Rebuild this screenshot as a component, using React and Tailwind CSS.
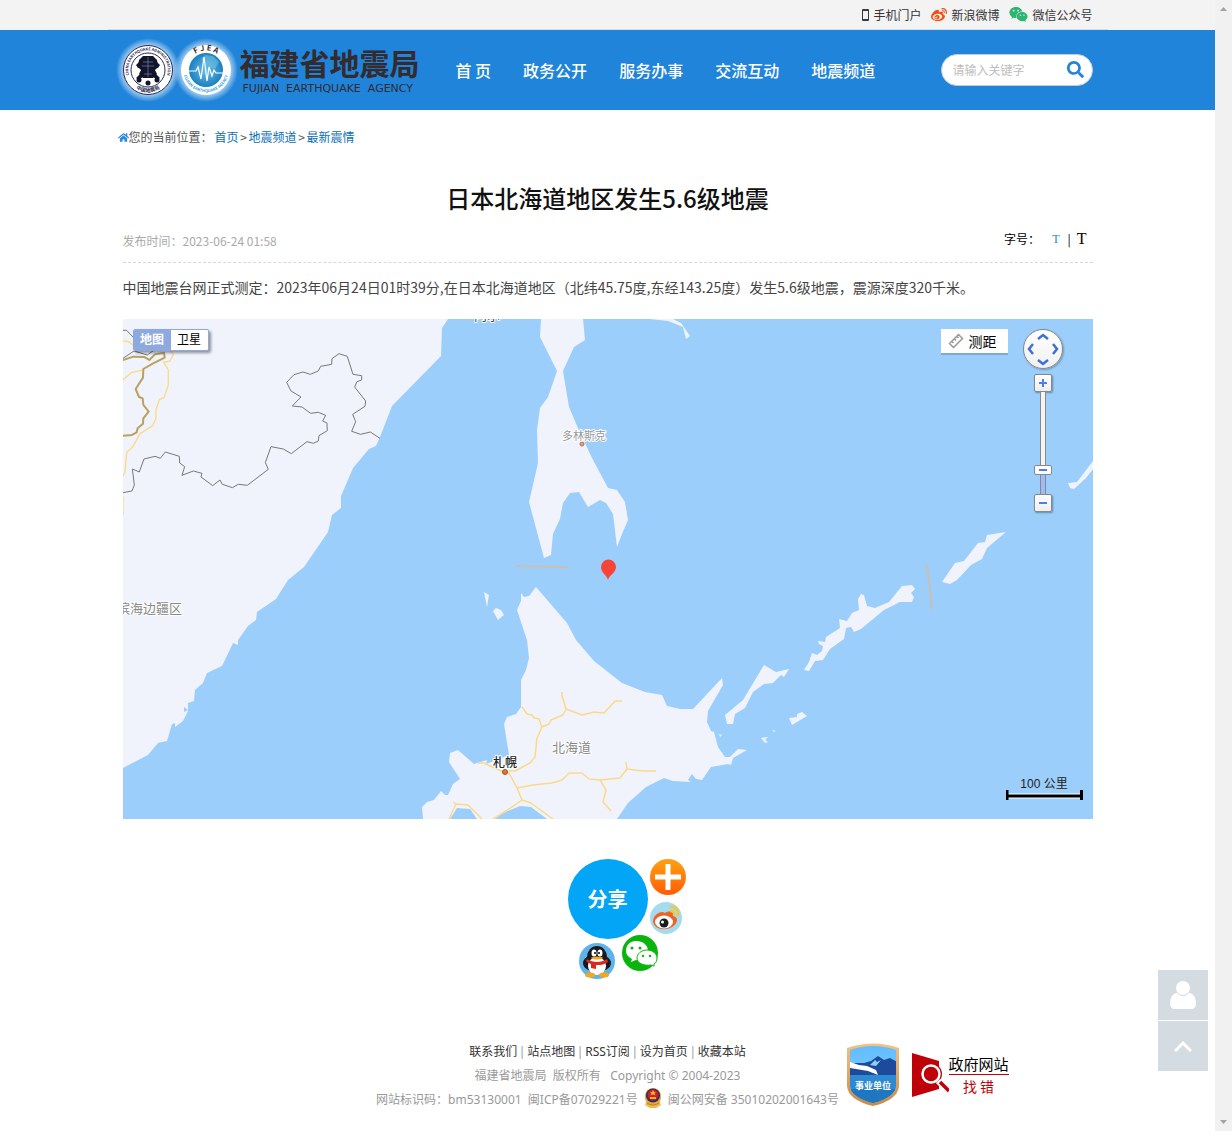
// src/App.jsx
import React, { useState } from "react";

// Icons
import { FaWeibo, FaWeixin, FaSearch, FaHome } from "react-icons/fa";

const navItems = ["首 页", "政务公开", "服务办事", "交流互动", "地震频道"];
const crumbs = ["首页", "地震频道", "最新震情"];
const footerLinks = ["联系我们", "站点地图", "RSS订阅", "设为首页", "收藏本站"];

const MIN_ZOOM = 0;
const MAX_ZOOM = 17;

function TopBar() {
  return (
    <div className="bg-[#f3f3f3]">
      <div className="mx-auto flex h-[30px] max-w-[1000px] items-center justify-end gap-[10px] border-b border-[#cfdfee] px-[15px] text-xs text-[#333]">
        <a href="#mobile" className="flex items-center gap-1">
          <svg viewBox="0 0 7 12" className="h-3 w-[7px]">
            <rect width="7" height="12" rx="1" fill="#3a3a3a" />
            <rect x="1" y="2" width="5" height="8" fill="#f3f3f3" />
          </svg>
          手机门户
        </a>
        <a href="#weibo" className="flex items-center gap-1">
          <FaWeibo size={16} className="text-[#fb4a0c]" />
          新浪微博
        </a>
        <a href="#wechat" className="flex items-center gap-1">
          <FaWeixin size={19} className="text-[#2cb672]" />
          微信公众号
        </a>
      </div>
    </div>
  );
}

function Emblems() {
  return (
    <svg viewBox="0 0 132 80" className="h-20 w-[132px] shrink-0">
      <defs>
        <radialGradient id="glow">
          <stop offset="0.76" stopColor="#fff" stopOpacity="0.6" />
          <stop offset="1" stopColor="#fff" stopOpacity="0" />
        </radialGradient>
        <radialGradient id="globe">
          <stop offset="0" stopColor="#6cc0e6" />
          <stop offset="1" stopColor="#1a80c0" />
        </radialGradient>
        <path id="ringA" d="M23 50 A19.700 19.700 0 1 1 57 50" />
        <path id="ringB" d="M22 53 A22.500 22.500 0 0 0 58 53" />
        <path id="ringD" d="M75.500 44 A23 23 0 0 0 120.500 44" />
        <path id="ringE" d="M83 27.500 A19.500 19.500 0 0 1 113 27.500" />
      </defs>
      <circle cx="40" cy="40" r="32" fill="url(#glow)" />
      <circle cx="98" cy="40" r="32" fill="url(#glow)" />

      <circle cx="40" cy="40" r="24.500" fill="#fff" stroke="#262a52" strokeWidth="1" />
      <circle cx="40" cy="40" r="17" fill="#fff" stroke="#262a52" strokeWidth="1" />
      <text fontSize="3.800" fontWeight="700" fill="#262a52" textAnchor="middle">
        <textPath href="#ringA" startOffset="50%">CHINA EARTHQUAKE ADMINISTRATION</textPath>
      </text>
      <text fontSize="5" fontWeight="700" fill="#262a52" textAnchor="middle">
        <textPath href="#ringB" startOffset="50%">中国地震局</textPath>
      </text>
      <g fill="#12142c">
        <path d="M35 26h10l4 4 1 7-3 3 2 4-4 4h-10l-4-4 2-4-3-3 1-7z" />
        <path d="M31 32l-3 3 2 3 3-1zM49 32l3 3-2 3-3-1zM33 43l-5 5 3 2 5-4zM47 43l5 5-3 2-5-4z" />
        <circle cx="31" cy="50" r="2.500" />
        <circle cx="40" cy="53" r="2.500" />
        <circle cx="49" cy="50" r="2.500" />
      </g>
      <path d="M35 32h10M34 36h12M36 44h8M40 27v20" stroke="#7c80a0" strokeWidth="0.700" />

      <circle cx="98" cy="40" r="25" fill="#fff" />
      <circle cx="98" cy="40" r="17" fill="url(#globe)" />
      <path d="M93 29l4-4 8 1 6 6-4 7-8-3z" fill="#7cc9e8" opacity="0.500" />
      <text fontSize="7.500" fontWeight="700" fill="#3a2c2c" textAnchor="middle">
        <textPath href="#ringE" startOffset="50%">F J E A</textPath>
      </text>
      <text fontSize="4" fontWeight="700" fill="#3aa0dc" textAnchor="middle">
        <textPath href="#ringD" startOffset="50%">FUJIAN EARTHQUAKE AGENCY</textPath>
      </text>
      <path
        d="M81 41h7l2-4 3 12 3-22 3 24 2-14 3 9 2-6 2 3h8"
        fill="none"
        stroke="#fff"
        strokeWidth="1.200"
      />
    </svg>
  );
}

function Header() {
  return (
    <header className="bg-[#1f84da]">
      <div className="mx-auto flex h-20 max-w-[1000px] items-center pr-[15px]">
        <a href="#home" className="flex items-center text-[#332b2e]">
          <Emblems />
          <span className="flex w-[182px] flex-col gap-1">
            <span className="text-[30px] leading-[34px] font-bold whitespace-nowrap">福建省地震局</span>
            <span className="pl-[3px] font-['DejaVu_Sans',sans-serif] text-[11px] leading-3 whitespace-pre">
              {"FUJIAN  EARTHQUAKE  AGENCY"}
            </span>
          </span>
        </a>
        <nav className="ml-[34px] flex gap-8 text-base font-medium whitespace-nowrap text-white">
          {navItems.map((item) => (
            <a key={item} href="#nav">
              {item}
            </a>
          ))}
        </nav>
        <form
          className="ml-auto flex h-8 w-[152px] items-center rounded-full border border-[#c4cdd6] bg-white pr-2 pl-[11px]"
          onSubmit={(e) => e.preventDefault()}
        >
          <input
            type="text"
            aria-label="搜索"
            placeholder="请输入关键字"
            className="w-full min-w-0 bg-transparent text-xs outline-none placeholder:text-[#bdbdbd]"
          />
          <button type="submit" aria-label="搜索" className="shrink-0 pb-0.5 text-[#1f84da]">
            <FaSearch size={17} />
          </button>
        </form>
      </div>
    </header>
  );
}

function MapCanvas() {
  return (
    <svg
      viewBox="123 319 970 500"
      preserveAspectRatio="xMidYMid slice"
      className="block h-[500px] w-full bg-[#9bcefa]"
    >
      {/* Land */}
      <g fill="#f0f3fb">
        <path d="M123 319H448L442 328 441 356 392 406 380 437 376 446 369 449 353 468 341 496 341 508 332 515 328 532 304 567 288 580 276 599 257 612 256 620 248 626 238 640 238 645 233 643 222 666 207 673 203 683 195 690 194 701 188 703 188 711 183 721 175 727 175 723 172 724 167 741 158 743 148 755 123 768Z" />
        <path d="M541 319L540 337 557 371 548 397 540 408 537 430 538 463 529 502 544 558 551 555 553 534 560 519 563 503 570 493 579 492 588 507 600 500 606 503 613 514 617 547 622 534 628 520 625 502 617 490 608 488 592 458 585 443 578 428 569 407 563 371 574 347 585 340 583 319Z" />
        <path d="M650 319H673L681 323 690 336 686 339 683 327 668 321Z" />
        <path d="M521 593L524 597 529 596 536 587 567 623 576 640 594 661 622 683 645 692 662 695 667 706 680 709 693 709 722 678 723 685 708 711 707 722 711 731 714 732 718 747 725 757 730 757 738 749 747 750 733 758 731 765 728 764 711 767 702 780 696 779 692 774 688 780 691 782 673 781 664 778 646 787 628 803 617 819H547L531 807 520 806 503 813 495 819H477L470 809 457 808 450 819H423L422 807 427 802 434 800 441 791 445 795 448 795 453 784 460 779 449 762 450 753 458 750 474 764 487 760 486 764 509 755 504 724 507 717 516 714 521 707 521 680 526 670 529 658 527 640 517 610 521 601Z" />
        <path d="M1006 532L987 535 985 542 978 543 964 561 955 563 942 582 950 584 957 580 971 565 982 559 987 548Z" />
        <path d="M804 670L809 671 815 661 823 660 830 649 844 639 846 628 851 627 854 632 861 629 884 610 900 602 912 602 914 597 911 593 915 589 912 585 902 586 889 602 875 608 867 606 864 595 861 594 858 599 859 610 852 613 847 621 839 619 840 628 826 637 825 642 818 641 819 644 823 646 822 651 817 655 812 653 809 662Z" />
        <path d="M764 665L776 672 789 669 784 677 781 675 773 683 764 684 753 692 745 708 735 714 733 724 727 724 725 715 743 700Z" />
        <path d="M789 718L797 717 797 714 802 712 807 716 792 725ZM761 738L768 737 765 740 768 742 765 743ZM772 730L776 731 774 732Z" />
        <path d="M1093 461L1077 482 1068 483 1070 488 1074 489 1086 478 1093 469Z" />
        <path d="M484 592L489 595 487 607ZM496 608L501 610 504 615 498 620 493 611ZM719 734L722 735 720 737Z" />
      </g>
      <path d="M184 707l4 3-4 2z" fill="#9bcefa" />

      {/* Sea routes */}
      <path d="M517 566L568 567M927 564L932 609" stroke="#c9bfb4" strokeWidth="2" />

      {/* Roads and borders, north-west */}
      <g transform="translate(120 315) scale(0.3333)" fill="none" strokeLinejoin="round">
        <path
          d="M9 78L25 80 42 92 90 100 M9 195L35 172 70 165 M130 140L145 165 145 210 132 248 118 254 108 285 108 310 98 332 60 356 38 396 20 412 15 470 9 482 M9 545V600 M110 104L150 106 160 118 150 138 130 142"
          stroke="#fcd985"
          strokeWidth="4"
        />
        <path
          d="M9 135L40 125 72 126 88 135 105 118 132 114 134 128 98 146 70 162 69 188 47 222 57 246 68 250 70 270 86 290 70 310 69 326 53 340 50 352 36 360 9 362"
          stroke="#b8a261"
          strokeWidth="6"
        />
        <path
          d="M9 46L20 46 50 78 M9 130L42 108 82 120 110 100 M9 533L36 528 43 510 37 462 58 471 72 432 105 424 121 430 136 411 178 424 179 444 194 455 186 481 220 468 246 475 243 486 278 512 300 495 307 508 337 518 355 508 382 511 445 463 436 443 453 395 490 402 514 416 561 380 580 385 595 378 597 362 622 347 621 324 608 318 617 301 595 292 572 295 546 276 517 273 543 246 513 228 500 202 522 179 549 171 571 178 595 168 602 154 635 148 636 131 657 116 682 124 699 178 725 182 725 195 711 200 704 216 737 258 735 274 698 298 707 320 695 349 722 358 751 351 780 370"
          stroke="#777"
          strokeWidth="3"
        />
      </g>

      {/* Roads, Hokkaido */}
      <path
        d="M522 707L527 714 532 715 534 718 539 719 542 727 M562 692L562 696 566 709 563 715 551 720 549 724 542 727 537 738 535 757 530 763 515 771 509 771 M566 709L582 715 594 712 604 713 615 701 622 701 M478 763L484 763 501 771 509 773 517 788 522 800 506 811 493 819 M522 800L531 803 553 819 M517 788L533 785 552 783 562 780 569 773 582 773 589 779 600 780 620 778 627 769 643 771 656 771 M626 762L627 769 M600 780L606 790 603 802 611 811 M453 802L456 804 468 805 482 819 M456 804L449 819"
        fill="none"
        stroke="#fcd98a"
        strokeWidth="1.500"
        strokeLinejoin="round"
      />

      {/* Places */}
      <circle cx="582" cy="444" r="2" fill="#e8a080" stroke="#a87058" />
      <circle cx="505" cy="772" r="2.500" fill="#e0762c" stroke="#a35420" />
      <g stroke="#fff" strokeWidth="2" strokeLinejoin="round" style={{ paintOrder: "stroke" }}>
        <text x="474" y="320" fontSize="13" fill="#444">内尔</text>
        <text x="562" y="440" fontSize="11" fill="#999">多林斯克</text>
        <text x="117" y="613" fontSize="13" fill="#888">滨海边疆区</text>
        <text x="552" y="752" fontSize="13" fill="#888">北海道</text>
        <text x="493" y="767" fontSize="12" fontWeight="500" fill="#222">札幌</text>
      </g>

      {/* Epicentre */}
      <path d="M608 580c-1-5-7-7-7-13a7 7 0 0 1 15 0c0 6-7 8-8 13z" fill="#f84437" />
    </svg>
  );
}

function ZoomControl() {
  const [zoom, setZoom] = useState(4);
  const step = (d) => setZoom((z) => Math.min(MAX_ZOOM, Math.max(MIN_ZOOM, z + d)));
  const level = Math.round((zoom / MAX_ZOOM) * 92);

  const stepClass =
    "flex h-[18px] w-[18px] items-center justify-center rounded-xs border border-[#888] bg-linear-to-b from-white to-[#eee] shadow-[1px_1px_2px_#0005]";

  return (
    <div className="flex w-10 flex-col items-center">
      <div className="mb-[5px] flex h-10 w-10 items-center justify-center rounded-full border border-[#888] bg-linear-to-b from-white to-[#f0f0f0] shadow-[1px_1px_2px_#0004]">
        <svg viewBox="0 0 38 38" className="h-[38px] w-[38px]" fill="none" stroke="#3c6fd8" strokeWidth="2.500">
          <path d="M14 9l5-4 5 4M14 30l5 4 5-4M9 14l-4 5 4 5M29 14l4 5-4 5" />
        </svg>
      </div>
      <button type="button" aria-label="放大一级" className={stepClass} onClick={() => step(1)}>
        <svg viewBox="0 0 8 8" className="h-2 w-2" stroke="#4d7fe8" strokeWidth="2">
          <path d="M0 4h8M4 0v8" />
        </svg>
      </button>
      <div className="relative flex h-[102px] w-[18px] justify-center">
        <div className="flex h-full w-1.5 flex-col justify-end border-x border-[#888] bg-[#f4f4f2]">
          <div className="bg-[#9fbafa]" style={{ height: level }} />
        </div>
        <span
          className="absolute left-0 h-2.5 w-[18px] rounded-xs border border-[#888] bg-white px-1 py-[3px]"
          style={{ bottom: level - 3 }}
        >
          <span className="block h-0.5 bg-[#4d7fe8]" />
        </span>
        <input
          type="range"
          aria-label="缩放级别"
          min={MIN_ZOOM}
          max={MAX_ZOOM}
          value={zoom}
          onChange={(e) => setZoom(Number(e.target.value))}
          className="absolute inset-0 h-full w-full opacity-0 [direction:rtl] [writing-mode:vertical-lr]"
        />
      </div>
      <button type="button" aria-label="缩小一级" className={stepClass} onClick={() => step(-1)}>
        <span className="h-0.5 w-2 bg-[#4d7fe8]" />
      </button>
    </div>
  );
}

function QuakeMap() {
  return (
    <div className="relative mt-5 overflow-hidden">
      <MapCanvas />

      {/* Map type */}
      <div className="absolute top-2.5 left-2.5 flex h-[22px] overflow-hidden rounded-xs border border-[#8ea8e0] bg-white text-xs shadow-[2px_2px_3px_#0006]">
        <button type="button" className="w-[37px] bg-[#8ea8e0] pb-0.5 font-bold text-white">
          地图
        </button>
        <button type="button" className="w-[37px] pb-0.5 text-black">
          卫星
        </button>
      </div>

      {/* Ruler */}
      <button
        type="button"
        className="absolute top-2.5 right-[85px] flex h-6 w-[67px] items-center gap-[5px] bg-white pl-[7px] text-sm text-black shadow-[0_2px_0_#7fa9cf]"
      >
        <svg viewBox="0 0 16 16" className="h-4 w-4" fill="none" stroke="#999" strokeWidth="1.500">
          <path d="M1.500 10.500l9-9 4 4-9 9zM4 8.500l1.500 1.500M6.500 6l1.500 1.500M9 3.500l1.500 1.500" />
        </svg>
        测距
      </button>

      <div className="absolute top-2.5 right-[30px]">
        <ZoomControl />
      </div>

      {/* Scale */}
      <div className="absolute right-2.5 bottom-[19px] flex w-[77px] flex-col items-center">
        <span className="font-['Liberation_Sans','Noto_Sans_CJK_SC',sans-serif] text-xs leading-3 text-[#222]">
          100 公里
        </span>
        <svg viewBox="0 0 77 10" className="h-2.5 w-[77px]">
          <path d="M0 6h77" stroke="#fff" strokeWidth="5" />
          <path d="M0 6h77" stroke="#000" strokeWidth="3" />
          <path d="M1 0v10M75.500 0v10" stroke="#000" strokeWidth="3" />
        </svg>
      </div>
    </div>
  );
}

function Share() {
  return (
    <div className="mx-auto mt-10 w-20">
      <div className="flex w-max gap-0.5">
        <button
          type="button"
          className="h-20 w-20 rounded-full bg-[#03a5f7] text-xl font-bold text-white"
        >
          分享
        </button>
        <div className="flex flex-col gap-[7px]">
          <button
            type="button"
            aria-label="更多"
            className="flex h-9 w-9 items-center justify-center rounded-full bg-linear-to-b from-[#ffa012] to-[#ff5a06]"
          >
            <svg viewBox="0 0 26 26" className="h-[26px] w-[26px]" stroke="#fff" strokeWidth="5">
              <path d="M0 13h26M13 0v26" />
            </svg>
          </button>
          <button type="button" aria-label="新浪微博" className="w-8">
            <svg viewBox="0 0 32 32" className="h-8 w-8">
              <circle cx="16" cy="16" r="16" fill="#a5dbee" />
              <path d="M3 19c1-7 8-11 12-8 5-3 9-1 8 3 4 1 5 4 3 7-4 8-22 9-23-2z" fill="#ef6322" />
              <ellipse cx="14" cy="20" rx="9" ry="6.500" fill="#fff" />
              <circle cx="14" cy="21" r="4.500" fill="#1c1c1c" />
              <circle cx="12.500" cy="20" r="1.500" fill="#fff" />
              <path d="M20 5c6-1 9 3 8 9M20 9c3 0 5 1 4 4" fill="none" stroke="#f3c73c" strokeWidth="2.500" />
            </svg>
          </button>
        </div>
      </div>
      <div className="flex w-max items-end gap-[7px] pl-[11px]">
        <button type="button" aria-label="QQ">
          <svg viewBox="0 0 36 36" className="h-9 w-9">
            <circle cx="18" cy="18" r="18" fill="#5db4ea" />
            <ellipse cx="18" cy="20" rx="14" ry="9" fill="#1a1a1e" />
            <ellipse cx="18" cy="14" rx="10" ry="11" fill="#1a1a1e" />
            <ellipse cx="18" cy="23" rx="9" ry="9" fill="#fff" />
            <ellipse cx="11" cy="32" rx="5" ry="2.500" fill="#f7a51b" />
            <ellipse cx="25" cy="32" rx="5" ry="2.500" fill="#f7a51b" />
            <ellipse cx="15" cy="10" rx="2.500" ry="3.500" fill="#fff" />
            <ellipse cx="21" cy="10" rx="2.500" ry="3.500" fill="#fff" />
            <circle cx="16" cy="10" r="1" />
            <circle cx="20" cy="10" r="1" />
            <ellipse cx="18" cy="15" rx="6" ry="1.500" fill="#f7a51b" />
            <path d="M8 16c6 4 14 4 20 0l1 3c-4 3-8 3-12 3v4l-5-1v-4c-3-1-4-2-5-3z" fill="#e0261c" />
          </svg>
        </button>
        <button type="button" aria-label="微信" className="-mt-1 mb-2">
          <svg viewBox="0 0 36 36" className="h-9 w-9">
            <circle cx="18" cy="18" r="18" fill="#09b50c" />
            <path d="M14 6c7 0 12 4 12 10s-5 9-12 9l-5 2 1-3c-4-2-6-5-6-8 0-6 4-10 10-10z" fill="#fff" />
            <path d="M25 15c6 0 10 4 10 8 0 3-1 5-3 6l0 2-3-1c-8 1-14-2-14-7 0-4 4-8 10-8z" fill="#fff" stroke="#09b50c" />
            <g fill="#09b50c">
              <circle cx="10" cy="13" r="1.500" />
              <circle cx="18" cy="13" r="1.500" />
              <circle cx="21" cy="21" r="1.200" />
              <circle cx="28" cy="21" r="1.200" />
            </g>
          </svg>
        </button>
      </div>
    </div>
  );
}

function PoliceBadge() {
  return (
    <svg viewBox="0 0 20 20" className="mx-[5px] mb-[5px] inline-block h-5 w-5">
      <path d="M2 9l1 6-1 2 5 3h6l5-3-1-2 1-6z" fill="#eeb94c" />
      <circle cx="10" cy="8" r="8" fill="#e5a531" />
      <circle cx="10" cy="7.500" r="7" fill="#26306e" />
      <circle cx="10" cy="7" r="5.500" fill="#cf1f1c" />
      <path d="M10 2l1 2h2l-1.500 1.500 1 2L10 6.500 7.500 7.500l1-2L7 4h2zM7 9h6v2H7z" fill="#f1b23e" />
      <path d="M4 15q6 4 12 0" fill="none" stroke="#b97f1c" />
    </svg>
  );
}

function InstitutionBadge() {
  return (
    <svg viewBox="0 0 52 64" className="h-16 w-[52px]">
      <defs>
        <linearGradient id="rim" x2="0" y2="1">
          <stop offset="0" stopColor="#f3c285" />
          <stop offset="1" stopColor="#c98a45" />
        </linearGradient>
        <linearGradient id="shieldSky" x2="0" y2="1">
          <stop offset="0" stopColor="#5fbcff" />
          <stop offset="1" stopColor="#8fd0ff" />
        </linearGradient>
        <clipPath id="shield">
          <path d="M3 7Q26-1 49 7V43Q48 54 26 60 4 54 3 43Z" />
        </clipPath>
      </defs>
      <path d="M0 5Q26-4 52 5V43Q51 57 26 63 1 57 0 43Z" fill="url(#rim)" />
      <g clipPath="url(#shield)">
        <rect width="52" height="64" fill="url(#shieldSky)" />
        <path d="M0 20l17 0 7-2 7-5 6 4 6-2 9 5v15H0z" fill="#1c4b9c" />
        <path d="M3 19l9 3 8 1 9 4 2 5-10-4-18-3z" fill="#fff" />
        <path d="M23 22l5-5 2 2 4-2-5 6z" fill="#8fd0ff" />
        <rect y="32" width="52" height="32" fill="#2d8ad2" />
        <rect y="46" width="52" height="18" fill="#1e77c0" />
      </g>
      <text x="26" y="46" textAnchor="middle" fontSize="9" fontWeight="700" fill="#fff">
        事业单位
      </text>
    </svg>
  );
}

function Footer() {
  return (
    <footer className="mt-[61px] mb-[19px] grid grid-cols-[1fr_470px_1fr] items-start text-xs leading-6 text-[#999]">
      <div className="col-start-2 text-center font-['Noto_Sans','Noto_Sans_CJK_SC',sans-serif] whitespace-pre">
        <p className="flex justify-center">
          {footerLinks.map((link, idx) => (
            <React.Fragment key={link}>
              {idx > 0 && <span className="w-2.5">|</span>}
              <a href="#footer" className="text-[#333]">
                {link}
              </a>
            </React.Fragment>
          ))}
        </p>
        <p>{"福建省地震局  版权所有   Copyright © 2004-2023"}</p>
        <p className="h-6">
          {"网站标识码：bm53130001  "}
          <a href="#icp">闽ICP备07029221号</a>
          <PoliceBadge />
          <a href="#police">闽公网安备 35010202001643号</a>
        </p>
      </div>
      <div className="flex items-center gap-[13px] pt-[3px] pl-1">
        <a href="#institution" className="shrink-0">
          <InstitutionBadge />
        </a>
        <a href="#report" className="flex shrink-0 items-center whitespace-nowrap">
          <svg viewBox="0 0 37 44" className="h-11 w-[37px]">
            <path d="M0 0l27 8v28L0 44z" fill="#bf0008" />
            <circle cx="19" cy="21" r="11" fill="#bf0008" />
            <circle cx="19" cy="21" r="8.500" fill="none" stroke="#fff" strokeWidth="2.500" />
            <path d="M26 28l10 10" stroke="#fff" strokeWidth="6" />
            <path d="M28 29l9 9" stroke="#bf0008" strokeWidth="3.500" />
          </svg>
          <span className="flex flex-col text-center text-[#bf0008]">
            <span className="text-[15px] leading-5 text-black">政府网站</span>
            <span className="border-t border-[#bf0008] text-sm leading-[22px]">找 错</span>
          </span>
        </a>
      </div>
    </footer>
  );
}

function App() {
  const [size, setSize] = useState("small");

  return (
    <div className="flex bg-white font-['Noto_Sans_CJK_SC','Noto_Sans',sans-serif]">
      <div className="min-w-0 flex-1">
        <TopBar />
        <Header />

        <main className="mx-auto max-w-[1000px]">
          <div className="flex items-center pt-[18px] pl-2.5 text-xs leading-[18px] text-[#555]">
            <FaHome size={11} className="text-[#2a8ae0]" />
            <span className="pr-0.5">您的当前位置：</span>
            {crumbs.map((crumb, idx) => (
              <React.Fragment key={crumb}>
                {idx > 0 && <span className="w-2.5 text-center">&gt;</span>}
                <a href="#crumb" className="text-[#0b6fb8]">
                  {crumb}
                </a>
              </React.Fragment>
            ))}
          </div>

          <article className="px-[15px]">
            <h1 className="mt-[34px] text-center text-2xl leading-9 font-medium text-[#111]">
              日本北海道地区发生5.6级地震
            </h1>
            <div className="mt-3 flex h-[35px] justify-between border-b border-dashed border-[#d8d8d8] text-xs leading-[26px]">
              <span className="text-[#aaa]">发布时间：2023-06-24 01:58</span>
              <div className="flex items-center self-start pr-1.5 leading-[22px] text-black">
                <span className="pr-3">字号：</span>
                <button
                  type="button"
                  aria-label="小号字"
                  onClick={() => setSize("small")}
                  className="font-['Liberation_Serif',serif] text-[#1f84da]"
                >
                  T
                </button>
                <span className="pr-1.5 pl-2">|</span>
                <button
                  type="button"
                  aria-label="大号字"
                  onClick={() => setSize("large")}
                  className="font-['Liberation_Serif',serif] text-base leading-[22px]"
                >
                  T
                </button>
              </div>
            </div>
            <p
              className={`mt-3 leading-6 text-[#444] ${size === "small" ? "text-sm" : "text-lg"}`}
            >
              中国地震台网正式测定：2023年06月24日01时39分,在日本北海道地区（北纬45.75度,东经143.25度）发生5.6级地震，震源深度320千米。
            </p>
            <QuakeMap />
            <Share />
            <Footer />
          </article>
        </main>
      </div>

      {/* Scroll rail */}
      <div className="flex w-[17px] shrink-0 flex-col items-center justify-between bg-[#f1f1f1] py-[7px] text-[#a3a3a3]">
        <svg viewBox="0 0 7 4" className="h-1 w-[7px]" fill="currentColor">
          <path d="M0 4l3.500-4L7 4z" />
        </svg>
        <svg viewBox="0 0 7 4" className="h-1 w-[7px]" fill="currentColor">
          <path d="M0 0l3.500 4L7 0z" />
        </svg>
      </div>

      {/* Side tools */}
      <div className="fixed right-6 bottom-[60px] flex flex-col gap-px">
        <button
          type="button"
          aria-label="个人中心"
          className="flex h-[50px] w-[50px] items-center justify-center bg-[#d4dbe1] text-white"
        >
          <svg viewBox="0 0 26 30" className="h-[30px] w-[26px]" fill="currentColor">
            <path d="M6 13h14q6 2 6 11 0 5-5 5H5q-5 0-5-5 0-9 6-11z" />
            <circle cx="13" cy="8" r="7.500" stroke="#d4dbe1" />
          </svg>
        </button>
        <button
          type="button"
          aria-label="返回顶部"
          className="flex h-[50px] w-[50px] items-center justify-center bg-[#d4dbe1] text-white"
        >
          <svg viewBox="0 0 18 12" className="h-3 w-[18px]" fill="none" stroke="currentColor" strokeWidth="3">
            <path d="M1 11l8-8 8 8" />
          </svg>
        </button>
      </div>
    </div>
  );
}

export default App;
